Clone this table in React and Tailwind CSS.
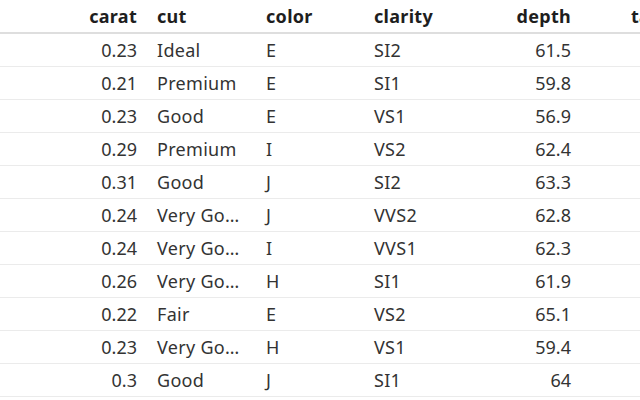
import React from "react";

const rows = [
    ["0.23", "Ideal", "E", "SI2", "61.5"],
    ["0.21", "Premium", "E", "SI1", "59.8"],
    ["0.23", "Good", "E", "VS1", "56.9"],
    ["0.29", "Premium", "I", "VS2", "62.4"],
    ["0.31", "Good", "J", "SI2", "63.3"],
    ["0.24", "Very Good", "J", "VVS2", "62.8"],
    ["0.24", "Very Good", "I", "VVS1", "62.3"],
    ["0.26", "Very Good", "H", "SI1", "61.9"],
    ["0.22", "Fair", "E", "VS2", "65.1"],
    ["0.23", "Very Good", "H", "VS1", "59.4"],
    ["0.3", "Good", "J", "SI1", "64"],
];

const grid = "grid grid-cols-[147px_109px_108px_109px_108px_109px]";

const App = () => {
    return (
        <div className="w-[640px] h-[400px] overflow-hidden bg-white text-[18px] font-['Noto_Sans',sans-serif]">
            <div className="w-[690px]">
                {/* header */}
                <div className={`${grid} h-[34px] items-center border-b-2 border-[#dedede] font-bold text-[#1e1e1e] tracking-[0.3px]`}>
                    <div className="px-[10px] text-right">carat</div>
                    <div className="px-[10px]">cut</div>
                    <div className="px-[10px]">color</div>
                    <div className="px-[10px]">clarity</div>
                    <div className="px-[10px] text-right">depth</div>
                    <div className="px-[10px] text-left pl-[50px]">table</div>
                </div>

                {rows.map((r, i) => (
                    <div key={i} className={`${grid} h-[33px] items-center border-b border-[#ebebeb] text-[#333]`}>
                        <div className="px-[10px] text-right">{r[0]}</div>
                        <div className="pl-[10px] pr-[16px] truncate tracking-[0.3px]">{r[1]}</div>
                        <div className="px-[10px] tracking-[0.3px]">{r[2]}</div>
                        <div className="px-[10px] tracking-[0.3px]">{r[3]}</div>
                        <div className="px-[10px] text-right">{r[4]}</div>
                        <div className="px-[10px] text-right"></div>
                    </div>
                ))}
            </div>
        </div>
    );
};

export default App;
